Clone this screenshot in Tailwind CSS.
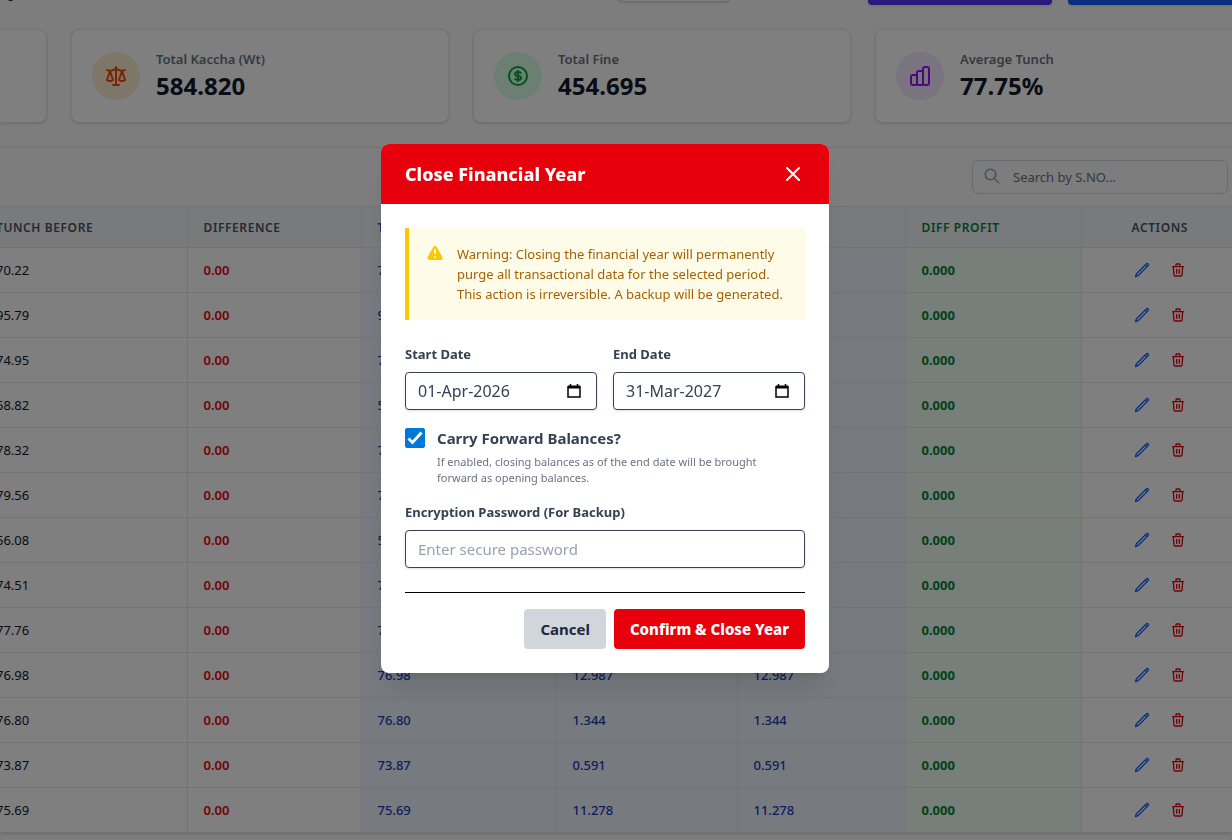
<!DOCTYPE html>
<html lang="en">
<head>
  <meta charset="UTF-8">
  <meta name="viewport" content="width=device-width, initial-scale=1.0">
  <title>Close Financial Year</title>
  <script src="https://cdn.jsdelivr.net/npm/@tailwindcss/browser@4"></script>
</head>
<body class="h-screen overflow-hidden bg-[#f8fbf8] font-['Segoe_UI','Noto_Sans',sans-serif] text-gray-900">
  <svg class="hidden">
    <symbol id="icon-pencil" viewBox="0 0 24 24" fill="none" stroke="currentColor" stroke-width="2" stroke-linecap="round" stroke-linejoin="round">
      <path d="m16.862 4.487 1.687-1.688a1.875 1.875 0 1 1 2.652 2.652L6.832 19.820a4.500 4.500 0 0 1-1.897 1.130l-2.685.8.8-2.685a4.500 4.500 0 0 1 1.130-1.897L16.863 4.487Zm0 0L19.500 7.125"/>
    </symbol>
    <symbol id="icon-trash" viewBox="0 0 24 24" fill="none" stroke="currentColor" stroke-width="2" stroke-linecap="round" stroke-linejoin="round">
      <path d="M19 7l-.867 12.142A2 2 0 0 1 16.138 21H7.862a2 2 0 0 1-1.995-1.858L5 7m5 4v6m4-6v6m1-10V4a1 1 0 0 0-1-1h-4a1 1 0 0 0-1 1v3M4 7h16"/>
    </symbol>
  </svg>

  <!-- Page header -->
  <header class="-mt-9 flex h-[41px] items-end gap-4">
    <h1 class="flex-1 pb-0.5 pl-2 text-xl font-bold">y</h1>
    <button aria-label="Filter" class="mb-[3px] h-9 w-[114px] shrink-0 rounded-md border border-gray-300 bg-white shadow-sm"></button>
    <button aria-label="Import" class="ml-[121px] h-10 w-[184px] shrink-0 rounded bg-indigo-600 shadow"></button>
    <button aria-label="Export" class="-mr-5 h-10 w-[184px] shrink-0 rounded bg-blue-600 shadow"></button>
  </header>

  <!-- Stat cards -->
  <section class="-mr-[21px] mt-6 grid grid-cols-[47px_1fr_1fr_1fr] gap-6">
    <div class="rounded-r-lg border border-l-0 border-gray-200 bg-white shadow"></div>
    <div class="flex items-center gap-4 rounded-lg border border-gray-200 bg-white px-5 py-[19px] shadow">
      <div class="flex size-12 items-center justify-center rounded-full bg-orange-100 text-orange-600">
        <svg class="size-6" viewBox="0 0 24 24" fill="none" stroke="currentColor" stroke-width="2" stroke-linecap="round" stroke-linejoin="round"><path d="M3 6l3 1m0 0l-3 9a5 5 0 0 0 6 0M6 7l3 9M6 7l6-2m6 2l3-1m-3 1l-3 9a5 5 0 0 0 6 0M18 7l3 9m-3-9l-6-2m0-2v2m0 16V5m0 16H9m3 0h3"/></svg>
      </div>
      <div>
        <p class="text-[13px] leading-5 font-semibold text-gray-500">Total Kaccha (Wt)</p>
        <p class="text-2xl leading-[34px] font-bold">584.820</p>
      </div>
    </div>
    <div class="flex items-center gap-4 rounded-lg border border-gray-200 bg-white px-5 py-[19px] shadow">
      <div class="flex size-12 items-center justify-center rounded-full bg-green-100 text-green-600">
        <svg class="size-6" viewBox="0 0 24 24" fill="none" stroke="currentColor" stroke-width="2" stroke-linecap="round" stroke-linejoin="round"><path d="M12 8c-1.657 0-3 .895-3 2s1.343 2 3 2 3 .895 3 2-1.343 2-3 2m0-8c1.110 0 2.080.402 2.599 1M12 8V7m0 1v8m0 0v1m0-1c-1.110 0-2.080-.402-2.599-1M21 12a9 9 0 1 1-18 0 9 9 0 0 1 18 0z"/></svg>
      </div>
      <div>
        <p class="text-[13px] leading-5 font-semibold text-gray-500">Total Fine</p>
        <p class="text-2xl leading-[34px] font-bold">454.695</p>
      </div>
    </div>
    <div class="flex items-center gap-4 rounded-lg border border-gray-200 bg-white px-5 py-[19px] shadow">
      <div class="flex size-12 items-center justify-center rounded-full bg-purple-100 text-purple-600">
        <svg class="size-6" viewBox="0 0 24 24" fill="none" stroke="currentColor" stroke-width="2" stroke-linecap="round" stroke-linejoin="round"><path d="M9 19v-6a2 2 0 0 0-2-2H5a2 2 0 0 0-2 2v6a2 2 0 0 0 2 2h2a2 2 0 0 0 2-2zm0 0V9a2 2 0 0 1 2-2h2a2 2 0 0 1 2 2v10m-6 0a2 2 0 0 0 2 2h2a2 2 0 0 0 2-2m0 0V5a2 2 0 0 1 2-2h2a2 2 0 0 1 2 2v14a2 2 0 0 1-2 2h-2a2 2 0 0 1-2-2z"/></svg>
      </div>
      <div>
        <p class="text-[13px] leading-5 font-semibold text-gray-500">Average Tunch</p>
        <p class="text-2xl leading-[34px] font-bold">77.75%</p>
      </div>
    </div>
  </section>

  <!-- Entries -->
  <main class="mt-6 border-t border-gray-200 shadow">
    <div class="flex justify-end px-1 py-3">
      <div class="relative w-64">
        <svg class="absolute left-[11px] top-[7px] size-[18px] text-gray-400" viewBox="0 0 24 24" fill="none" stroke="currentColor" stroke-width="2" stroke-linecap="round"><circle cx="10" cy="10" r="7"/><path d="M21 21l-6-6"/></svg>
        <input type="text" aria-label="Search" placeholder="Search by S.NO..." class="h-[34px] w-full rounded-md border border-gray-300 pl-10 pr-3 text-[13px] placeholder:text-gray-500">
      </div>
    </div>
    <table class="w-full table-fixed border-t border-gray-200 bg-white text-left text-[13px] [&_td:not(:last-child)]:pt-0.5 [&_th]:pt-0.5">
      <colgroup>
        <col class="w-[187px]"><col class="w-[174px]"><col class="w-[195px]"><col class="w-[181px]"><col class="w-[168px]"><col class="w-[176px]"><col>
      </colgroup>
      <thead class="bg-gray-100 text-xs uppercase tracking-wider text-gray-600">
        <tr class="h-[41px] border-b border-gray-200">
          <th class="whitespace-nowrap border-r border-gray-200 font-semibold"><span class="-ml-1">Tunch Before</span></th>
          <th class="border-r border-gray-200 px-4 font-semibold">Difference</th>
          <th class="border-r border-gray-200 px-4 font-semibold text-blue-700">Tunch</th>
          <th class="border-r border-gray-200 px-4 font-semibold text-blue-700">Fine</th>
          <th class="border-r border-gray-200 px-4 font-semibold text-blue-700">Total</th>
          <th class="border-r border-gray-200 px-4 font-semibold text-green-700">Diff Profit</th>
          <th class="pl-1.5 text-center font-semibold">Actions</th>
        </tr>
      </thead>
      <tbody id="rows"></tbody>
    </table>
  </main>

  <!-- Close year dialog -->
  <div class="fixed inset-0 flex items-start justify-center bg-black/50 pr-[22px] pt-36">
    <div role="dialog" aria-labelledby="dialogTitle" class="w-full max-w-md overflow-hidden rounded-lg bg-white shadow-xl">
      <div class="flex h-[60px] items-center justify-between bg-red-600 px-6 text-white">
        <h2 id="dialogTitle" class="text-lg font-extrabold">Close Financial Year</h2>
        <button type="button" aria-label="Close">
          <svg class="size-6" viewBox="0 0 24 24" fill="none" stroke="currentColor" stroke-width="2" stroke-linecap="round"><path d="M6 6l12 12M18 6L6 18"/></svg>
        </button>
      </div>
      <form class="p-6">
        <div class="flex gap-3 border-l-4 border-yellow-400 bg-yellow-50 p-4">
          <svg class="size-5 shrink-0 text-yellow-400" viewBox="0 0 20 20" fill="currentColor"><path fill-rule="evenodd" d="M8.257 3.099c.765-1.360 2.722-1.360 3.486 0l5.580 9.920c.75 1.334-.213 2.980-1.742 2.980H4.420c-1.530 0-2.493-1.646-1.743-2.980l5.580-9.920zM11 13a1 1 0 1 1-2 0 1 1 0 0 1 2 0zm-1-8a1 1 0 0 0-1 1v3a1 1 0 0 0 2 0V6a1 1 0 0 0-1-1z" clip-rule="evenodd"/></svg>
          <p class="text-[13px] leading-5 text-yellow-700">Warning: Closing the financial year will permanently purge all transactional data for the selected period. This action is irreversible. A backup will be generated.</p>
        </div>
        <div class="mt-6 grid grid-cols-2 gap-4">
          <div>
            <label for="startDate" class="block text-[13px] leading-5 font-bold text-gray-700">Start Date</label>
            <div class="relative mt-2">
              <input id="startDate" type="text" value="01-Apr-2026" class="h-[38px] w-full rounded border border-gray-700 px-3 text-base text-gray-700 shadow-sm">
              <svg class="absolute right-4 top-3 size-[14px]" viewBox="0 0 14 14" fill="none" stroke="black"><path d="M1 3h12" stroke-width="3"/><path d="M1 2v11h12V2M3.500 0v3M10.500 0v3" stroke-width="1.500"/></svg>
            </div>
          </div>
          <div>
            <label for="endDate" class="block text-[13px] leading-5 font-bold text-gray-700">End Date</label>
            <div class="relative mt-2">
              <input id="endDate" type="text" value="31-Mar-2027" class="h-[38px] w-full rounded border border-gray-700 px-3 text-base text-gray-700 shadow-sm">
              <svg class="absolute right-4 top-3 size-[14px]" viewBox="0 0 14 14" fill="none" stroke="black"><path d="M1 3h12" stroke-width="3"/><path d="M1 2v11h12V2M3.500 0v3M10.500 0v3" stroke-width="1.500"/></svg>
            </div>
          </div>
        </div>
        <div class="mt-4 flex gap-3">
          <div class="relative mt-[2px] size-5 shrink-0">
            <input id="carryForward" type="checkbox" checked class="size-5 appearance-none rounded-xs border border-gray-500 checked:border-[#0078d7] checked:bg-[#0078d7]">
            <svg class="pointer-events-none absolute inset-0 size-5" viewBox="0 0 20 20" fill="none" stroke="white" stroke-width="2.800"><path d="M3.500 10.500l4 4L16.500 4.500"/></svg>
          </div>
          <div>
            <label for="carryForward" class="block text-[15px] leading-6 font-bold text-gray-700">Carry Forward Balances?</label>
            <p class="mt-1 pr-8 text-[11px] leading-4 text-gray-500">If enabled, closing balances as of the end date will be brought forward as opening balances.</p>
          </div>
        </div>
        <label for="password" class="mt-4 block text-[13px] leading-5 font-bold text-gray-700">Encryption Password (For Backup)</label>
        <input id="password" type="password" placeholder="Enter secure password" class="mt-2 h-[38px] w-full rounded border border-gray-700 px-3 text-[15px] shadow-sm placeholder:text-gray-400">
        <div class="mt-6 flex justify-end gap-2 border-t border-black pt-4">
          <button type="button" class="h-10 rounded bg-gray-300 px-4 text-[15px] font-bold text-gray-800">Cancel</button>
          <button type="submit" class="h-10 rounded bg-red-600 px-4 text-[15px] font-extrabold text-white">Confirm &amp; Close Year</button>
        </div>
      </form>
    </div>
  </div>

  <script>
    var entries = [
      ['70.22', '1.250'], ['95.79', '2.410'], ['74.95', '3.120'], ['58.82', '1.904'], ['78.32', '4.385'],
      ['79.56', '6.240'], ['56.08', '2.118'], ['74.51', '5.027'], ['77.76', '8.316'], ['76.98', '12.987'],
      ['76.80', '1.344'], ['73.87', '0.591'], ['75.69', '11.278']
    ];
    document.getElementById('rows').innerHTML = entries.map(function (e) {
      return `<tr class="h-[45px] border-b border-gray-200">
        <td class="border-r border-gray-200"><span class="-ml-1">${e[0]}</span></td>
        <td class="border-r border-gray-200 px-4 font-semibold text-red-600">0.00</td>
        <td class="border-r border-gray-200 bg-blue-50 px-4 font-medium text-blue-800">${e[0]}</td>
        <td class="border-r border-gray-200 bg-blue-50 px-4 font-medium text-blue-800">${e[1]}</td>
        <td class="border-r border-gray-200 bg-blue-50 px-4 font-medium text-blue-800">${e[1]}</td>
        <td class="border-r border-gray-200 bg-green-50 px-4 font-bold text-green-700">0.000</td>
        <td class="pl-1.5">
          <div class="flex justify-center gap-5">
            <button aria-label="Edit" class="text-blue-600"><svg class="size-4"><use href="#icon-pencil"/></svg></button>
            <button aria-label="Delete" class="text-red-600"><svg class="size-4"><use href="#icon-trash"/></svg></button>
          </div>
        </td>
      </tr>`;
    }).join('');
  </script>
</body>
</html>
